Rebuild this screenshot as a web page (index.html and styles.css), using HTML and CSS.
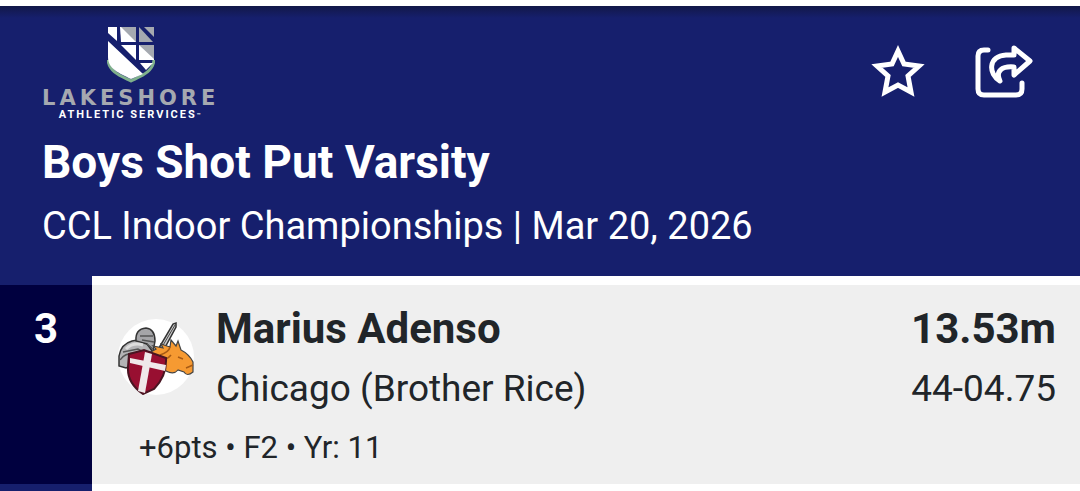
FILE: index.html
```
<!DOCTYPE html>
<html lang="en">
<head>
  <meta charset="UTF-8">
  <meta name="viewport" content="width=device-width, initial-scale=1.0">
  <title>Boys Shot Put Varsity</title>
  <link rel="stylesheet" href="styles.css">
</head>
<body>

  <header class="event-header">
    <div class="top-bar">
      <a href="#" class="logo">
        <svg class="logo-shield" viewBox="0 0 48 58" aria-hidden="true">
          <path d="M1 34 C2 46 14 50 24 55 C34 50 46 46 47 34" fill="none" stroke="#7fb08c" stroke-width="3"/>
          <path d="M1 15 L36 48 L24 53 C12 47 1 43 1 31 Z" fill="#fff"/>
          <path d="M1 1 H10 V15 L1 7 Z" fill="#fff"/>
          <path d="M13 1 H29 V16 H14 Z" fill="#fff"/>
          <path d="M14 1 H29 V16 Z" fill="#a5a9b0"/>
          <path d="M32 1 L46 16 H32 Z" fill="#a5a9b0"/>
          <path d="M37 1 H47 V11 Z" fill="#a5a9b0"/>
          <path d="M14 19 H29 V34 Z" fill="#fff"/>
          <path d="M32 19 H47 V34 H32 Z" fill="#fff"/>
          <path d="M32 19 H47 V33 Z" fill="#a5a9b0"/>
          <path d="M33 37 H46 L39 44 Z" fill="#fff"/>
        </svg>
        <span class="logo-name">LAKESHORE</span>
        <span class="logo-tagline">ATHLETIC SERVICES<span class="tm">™</span></span>
      </a>

      <div class="actions">
        <button type="button" aria-label="Favorite">
          <svg width="56" height="54" viewBox="0 0 56 54">
            <path d="M28 6 L34 19 L49 21 L38 31 L41 47 L28 40 L15 47 L18 31 L7 21 L22 19 Z" fill="none" stroke="#fff" stroke-width="5"/>
          </svg>
        </button>
        <button type="button" aria-label="Share">
          <svg width="60" height="54" viewBox="0 0 60 54" fill="none" stroke="#fff" stroke-width="5" stroke-linecap="round" stroke-linejoin="round">
            <path d="M14 5 H10 Q4 5 4 11 V44 Q4 50 10 50 H42 Q48 50 48 44 V38"/>
            <path d="M40 3 L56 16 L40 30 V22 C28 21 21 26 26 36 C14 29 14 11 32 10 L40 10 Z"/>
          </svg>
        </button>
      </div>
    </div>

    <h1>Boys Shot Put Varsity</h1>
    <p class="meet">CCL Indoor Championships | Mar 20, 2026</p>
  </header>

  <main>
    <article class="result">
      <div class="place">3</div>
      <div class="details">
        <div class="athlete">
          <svg class="avatar" viewBox="0 0 76 76" role="img" aria-label="Brother Rice">
            <circle cx="38" cy="38" r="38" fill="#fff"/>
            <!-- sword -->
            <path d="M38 34 L55 5 L58 4 L58 8 L44 34 Z" fill="#ccc" stroke="#333" stroke-width="1.500"/>
            <path d="M41 33 L57 6" stroke="#444" stroke-width="1"/>
            <!-- knight -->
            <path d="M1 47 L1 37 Q3 25 14 22 Q27 19 33 30 L38 38 L18 45 L8 49 Z" fill="#b4b4b6" stroke="#333" stroke-width="1.500"/>
            <path d="M18 22 Q17 10 28 9 Q37 10 37 22 L35 33 L29 25 Z" fill="#a5a5a8" stroke="#333" stroke-width="1.500"/>
            <path d="M22 17 L35 17 M24 21 L36 23 M5 33 L20 30 L29 35 M2 41 Q6 34 18 34 M29 25 L35 30" fill="none" stroke="#555" stroke-width="1.500"/>
            <path d="M8 30 Q15 23 25 26" fill="none" stroke="#ddd" stroke-width="3"/>
            <!-- horse -->
            <path d="M31 34 L38 30 L35 27 L45 29 L43 25 L52 28 L53 21 L58 27 L60 22 L63 31 Q71 35 75 43 L75 53 Q69 58 66 53 L60 51 Q56 56 48 52 L45 45 Q42 36 31 34 Z" fill="#f69a32" stroke="#444" stroke-width="1.200"/>
            <path d="M42 36 Q51 33 52 28 M46 41 Q51 39 53 36 M60 38 L65 40 M68 49 L75 46" fill="none" stroke="#a75a14" stroke-width="1.500"/>
            <!-- shield -->
            <path d="M11 35 L26 31 L48 39 Q49 57 36 70 L25 75 Q9 64 10 48 Z" fill="#980f31" stroke="#4a1522" stroke-width="2"/>
            <path d="M27 33 L34 35 L27 74 L20 72 Z" fill="#f0e9ea"/>
            <path d="M12 39 L48 46 L47 52 L12 44 Z" fill="#f0e9ea"/>
          </svg>
          <div class="who">
            <h2>Marius Adenso</h2>
            <p>Chicago (Brother Rice)</p>
          </div>
          <div class="mark">
            <strong>13.53m</strong>
            <p>44-04.75</p>
          </div>
        </div>
        <p class="meta">+6pts • F2 • Yr: 11</p>
      </div>
    </article>
  </main>

</body>
</html>
```

FILE: styles.css
```
body {
  font-family: Roboto, Arial, sans-serif;
  background-color: white;
  margin: 0;
  color: #212529;
}

h1, h2, p {
  margin: 0;
}

.event-header {
  border-top: 6px solid white;
  padding: 20px 42px 28px;
  background: linear-gradient(#121848, #161f6d 12px);
  color: white;
}

.top-bar {
  display: flex;
  justify-content: space-between;
  align-items: flex-start;
  height: 109px;
}

.logo {
  display: flex;
  flex-direction: column;
  align-items: center;
  color: white;
  text-decoration: none;
}

.logo-shield {
  width: 48px;
  height: 58px;
}

.logo-name {
  font: bold 21px/20px "DejaVu Sans", sans-serif;
  letter-spacing: 4px;
  margin-top: 4px;
  color: #a5a9b0;
}

.logo-tagline {
  font: bold 11px/14px Roboto, sans-serif;
  letter-spacing: 2px;
}

.tm {
  font-size: 6px;
  vertical-align: top;
}

.actions {
  display: flex;
  gap: 48px;
  padding: 19px 4px 0 0;
}

.actions button {
  display: block;
  padding: 0;
  border: none;
  background: none;
  cursor: pointer;
}

.actions svg {
  display: block;
}

h1 {
  font-size: 46px;
  line-height: 54px;
}

.meet {
  margin-top: 15px;
  font-size: 38px;
  line-height: 44px;
}

.result {
  display: flex;
}

.place {
  flex: 0 0 92px;
  border-top: 9px solid #161f6d;
  border-bottom: 7px solid #161f6d;
  padding-top: 19px;
  box-sizing: border-box;
  background-color: #00003f;
  color: white;
  font-size: 42px;
  font-weight: bold;
  line-height: 50px;
  text-align: center;
}

.details {
  flex: 1;
  border-top: 9px solid white;
  border-bottom: 7px solid white;
  padding: 19px 24px 18px 26px;
  background-color: #efefef;
}

.athlete {
  display: flex;
}

.avatar {
  width: 76px;
  height: 76px;
  margin: 15px 22px 0 0;
}

.who {
  flex: 1;
}

h2, .mark strong {
  display: block;
  font-size: 42px;
  font-weight: bold;
  line-height: 50px;
}

.who p, .mark p {
  margin-top: 13px;
  font-size: 37px;
  line-height: 44px;
}

.mark {
  text-align: right;
}

.meta {
  margin: 19px 0 0 21px;
  font-size: 31px;
  line-height: 36px;
}
```
